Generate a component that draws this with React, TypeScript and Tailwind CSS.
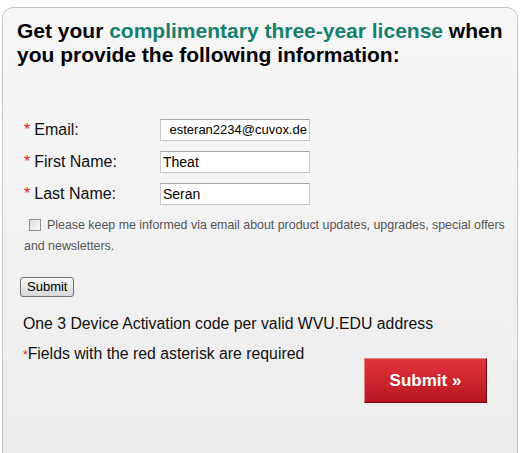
export default function App() {
  return (
    <div className="h-[453px] w-[523px] overflow-hidden bg-white pl-[2px] pt-[7px] font-['Liberation_Sans',Arial,sans-serif]">
      <div className="h-[470px] w-[516px] rounded-t-[11px] border border-[#c4c4c4] bg-gradient-to-b from-[#f7f7f7] to-[#ececec] pl-[14px] pr-[6px] pt-[11px]">
        <h1 className="text-[21px] font-bold leading-[24px] text-black">
          Get your <span className="text-[#15806c]">complimentary three-year license</span> when you provide the following information:
        </h1>

        <div className="mt-[52px] flex flex-col gap-[10px] pl-[7px] text-[16px] text-[#111]">
          <Field label="Email:" value="esteran2234@cuvox.de" small />
          <Field label="First Name:" value="Theat" />
          <Field label="Last Name:" value="Seran" />
        </div>

        <div className="mt-[10px] pl-[7px] pr-[4px] text-[12.4px] leading-[21px] text-[#555]">
          <span className="mr-[6px] ml-[5px] inline-block h-[12px] w-[12px] translate-y-[2px] border border-[#8e8e8e] bg-gradient-to-br from-[#dcdcdc] to-[#fbfbfb]" />
          Please keep me informed via email about product updates, upgrades, special offers and newsletters.
        </div>

        <button className="mt-[20px] ml-[3px] h-[20px] rounded-[3px] border border-[#707070] bg-gradient-to-b from-[#f6f6f6] to-[#d8d8d8] px-[6px] text-[13px] leading-[16px] text-black">
          Submit
        </button>

        <p className="mt-[16px] pl-[6px] text-[15.8px] leading-[20px] text-[#111]">
          One 3 Device Activation code per valid WVU.EDU address
        </p>

        <div className="mt-[10px] flex items-start justify-between pl-[6px] pr-[24px]">
          <p className="text-[15.8px] leading-[20px] text-[#111]">
            <span className="text-[12px] text-[#e0202a]">*</span>Fields with the red asterisk are required
          </p>
          <button className="mt-[14px] h-[45px] w-[123px] border border-t-[#d8868a] border-l-[#d8868a] border-r-[#6a0a10] border-b-[#6a0a10] bg-gradient-to-b from-[#e2333d] to-[#b8161f] text-[17px] font-bold text-white">
            Submit »
          </button>
        </div>
      </div>
    </div>
  );
}

function Field({ label, value, small }: { label: string; value: string; small?: boolean }) {
  return (
    <div className="flex h-[22px] items-center">
      <span className="w-[136px] shrink-0">
        <span className="mr-[4px] text-[#e0202a]">*</span>
        {label}
      </span>
      <div
        className={`flex h-[22px] w-[150px] items-center overflow-hidden border border-[#c8c8c8] border-t-[#a8a8a8] bg-white px-[2px] text-black ${
          small ? "justify-end text-[13px]" : "text-[14px]"
        }`}
      >
        <span className="whitespace-nowrap">{value}</span>
      </div>
    </div>
  );
}
